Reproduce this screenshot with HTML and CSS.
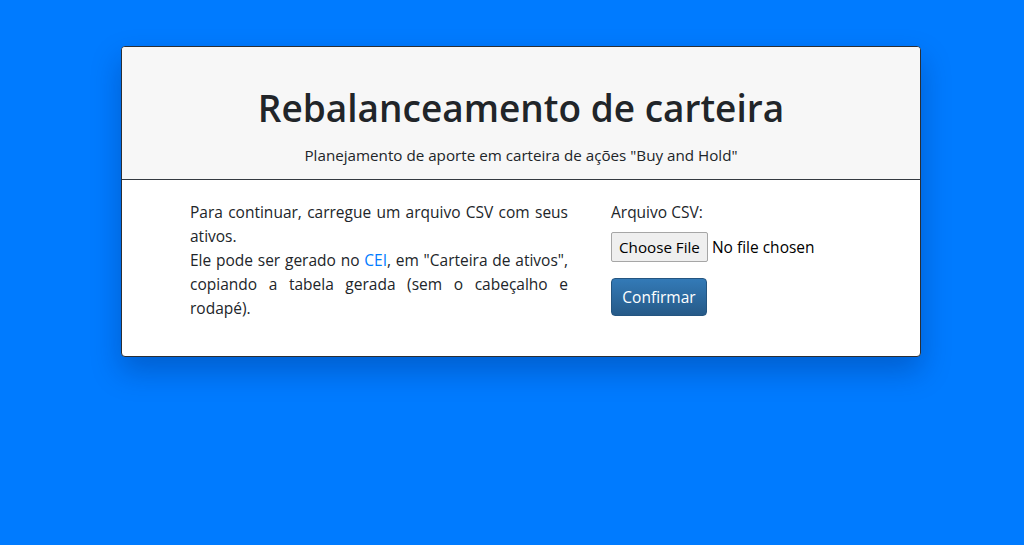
FILE: index.html
```html
<!DOCTYPE html>
<html lang="pt-BR">
<head>
<meta charset="utf-8">
<title>Rebalanceamento de carteira</title>
<link rel="stylesheet" href="styles.css">
</head>
<body>
<main class="page">
  <section class="card">
    <header class="card-header">
      <h1 class="title">Rebalanceamento de carteira</h1>
      <p class="subtitle">Planejamento de aporte em carteira de ações "Buy and Hold"</p>
    </header>
    <div class="card-body">
      <div class="intro">
        Para continuar, carregue um arquivo CSV com seus ativos.<br>
        Ele pode ser gerado no <a href="#" class="link">CEI</a>, em "Carteira de ativos", copiando a tabela gerada (sem o cabeçalho e rodapé).
      </div>
      <form class="upload">
        <label class="label" for="csv">Arquivo CSV:</label>
        <div class="file-row">
          <span class="file-btn">Choose File</span>
          <span class="file-name">No file chosen</span>
        </div>
        <button type="button" class="btn-primary">Confirmar</button>
      </form>
    </div>
  </section>
</main>
</body>
</html>
```

FILE: styles.css
```css
html, body {
  margin: 0;
  padding: 0;
  background: #007bff;
  height: 100%;
}
body {
  font-family: "Open Sans", "Noto Sans", sans-serif;
  color: #212529;
}
.page {
  padding: 46px 0 0 121px;
  display: flex;
  justify-content: flex-start;
}
.card {
  width: 798px;
  background: #fff;
  border: 1px solid #2a2f36;
  border-radius: 4px;
  box-shadow: 0 14px 30px rgba(0, 20, 80, 0.28);
  overflow: hidden;
}
.card-header {
  background: #f7f7f7;
  border-bottom: 1px solid #343a40;
  text-align: center;
  padding: 37px 0 12px;
  height: 83px;
}
.title {
  margin: 0;
  font-size: 37px;
  font-weight: 600;
  line-height: 48px;
  color: #212529;
}
.subtitle {
  margin: 13px 0 0;
  font-size: 15.2px;
  line-height: 20px;
  color: #212529;
}
.card-body {
  display: flex;
  gap: 43px;
  padding: 20px 0 36px 68px;
}
.intro {
  width: 378px;
  font-size: 15.5px;
  line-height: 24px;
  text-align: justify;
}
.link {
  color: #007bff;
  text-decoration: none;
}
.upload {
  display: flex;
  flex-direction: column;
  align-items: flex-start;
  font-size: 15.5px;
}
.label {
  line-height: 24px;
}
.file-row {
  display: flex;
  align-items: center;
  margin-top: 8px;
}
.file-btn {
  display: inline-block;
  box-sizing: border-box;
  height: 30px;
  line-height: 28px;
  padding: 0 7px;
  border: 1px solid #a6a6a6;
  border-radius: 2px;
  background: #efefef;
  color: #000;
  font-size: 15.2px;
}
.file-name {
  margin-left: 4px;
  color: #000;
}
.btn-primary {
  margin-top: 16px;
  height: 38px;
  width: 96px;
  border: 1px solid #245580;
  border-radius: 4px;
  background: linear-gradient(#337ab7, #265a88);
  color: #fff;
  font-family: inherit;
  font-size: 15.5px;
  padding: 0;
}
```
